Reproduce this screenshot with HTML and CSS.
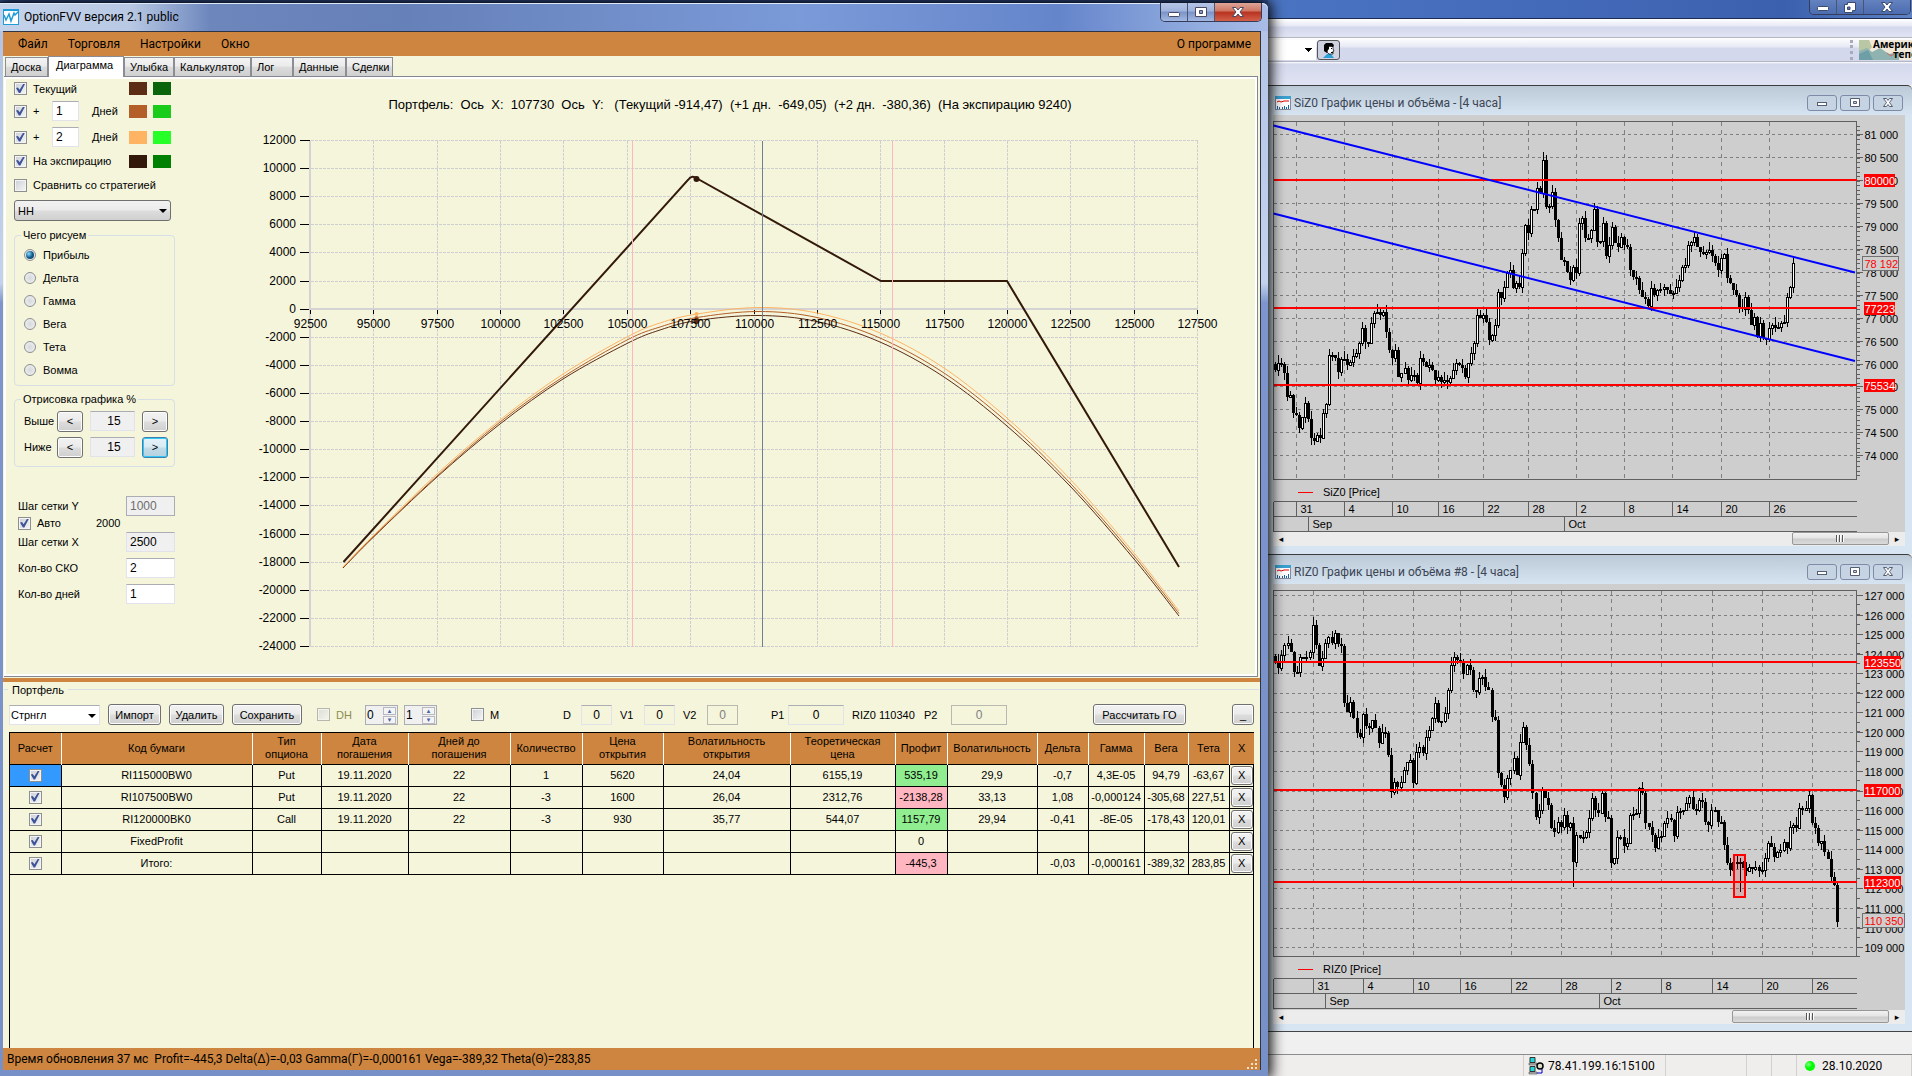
FILE: index.html
```html
<!DOCTYPE html>
<html lang="ru">
<head>
  <meta charset="UTF-8">
  <meta name="viewport" content="width=device-width, initial-scale=1.0">
  <title>OptionFVV версия 2.1 public</title>
  <link rel="stylesheet" href="styles.css">
</head>
<body>
  <div class="desktop">

    <section class="window">
      <header class="titlebar">
        <svg class="app-icon" width="16" height="16" viewBox="0 0 16 16">
          <rect x="0" y="0" width="16" height="16" fill="#1e9cd7"/>
          <rect x="1" y="2" width="14" height="13" fill="#fff"/>
          <path d="M1 6l2 5 3-6 2 7 3-8 1 2 4-4" fill="none" stroke="#1e9cd7" stroke-width="1.5"/>
        </svg>
        <h1>OptionFVV версия 2.1 public</h1>
        <div class="win-buttons">
          <button aria-label="Свернуть"><svg width="13" height="11"><rect x=".5" y="5.5" width="11" height="4" rx="1" fill="#fff" stroke="#4a4a60"/></svg></button>
          <button aria-label="Развернуть"><svg width="12" height="11"><path d="M.5.5h11v9H.5zM4.500 3.500v3h3v-3z" fill="#fff" fill-rule="evenodd" stroke="#4a4a60"/></svg></button>
          <button class="close" aria-label="Закрыть"><svg width="12" height="11"><path d="M.5.500h3.500l2 2.500 2-2.500h3.500l-3.500 4.500 3.500 4.500h-3.500l-2-2.500-2 2.500h-3.500l3.500-4.500z" fill="#fff" stroke="#4a4a60"/></svg></button>
        </div>
      </header>

      <div class="client">
        <nav class="menu">
          <a href="#">Файл</a>
          <a href="#">Торговля</a>
          <a href="#">Настройки</a>
          <a href="#">Окно</a>
          <a href="#" class="about">О программе</a>
        </nav>

        <div class="tabs">
          <button class="w43">Доска</button>
          <button class="w74 active">Диаграмма</button>
          <button class="w50">Улыбка</button>
          <button class="w76">Калькулятор</button>
          <button class="w41">Лог</button>
          <button class="w52">Данные</button>
          <button class="w46">Сделки</button>
        </div>

        <main class="page">
          <form class="sidebar">
            <div class="line first">
              <label><input type="checkbox" checked> Текущий</label>
              <i class="swatch c1"></i><i class="swatch c2"></i>
            </div>
            <div class="line days">
              <label class="plus"><input type="checkbox" checked> +</label>
              <input type="text" id="days1" value="1"><label class="unit" for="days1">Дней</label>
              <i class="swatch c3"></i><i class="swatch c4"></i>
            </div>
            <div class="line">
              <label class="plus"><input type="checkbox" checked> +</label>
              <input type="text" id="days2" value="2"><label class="unit" for="days2">Дней</label>
              <i class="swatch c5"></i><i class="swatch c6"></i>
            </div>
            <div class="line">
              <label><input type="checkbox" checked> На экспирацию</label>
              <i class="swatch c7"></i><i class="swatch c8"></i>
            </div>
            <div class="line">
              <label><input type="checkbox"> Сравнить со стратегией</label>
            </div>
            <div class="combo strategy">
              <select aria-label="Стратегия"><option>НН</option></select>
            </div>

            <fieldset class="draw">
              <legend>Чего рисуем</legend>
              <label><input type="radio" name="draw" checked> Прибыль</label>
              <label><input type="radio" name="draw"> Дельта</label>
              <label><input type="radio" name="draw"> Гамма</label>
              <label><input type="radio" name="draw"> Вега</label>
              <label><input type="radio" name="draw"> Тета</label>
              <label><input type="radio" name="draw"> Вомма</label>
            </fieldset>

            <fieldset class="range">
              <legend>Отрисовка графика %</legend>
              <div class="range-row">
                <label for="above">Выше</label>
                <button type="button">&lt;</button>
                <input type="text" id="above" value="15" readonly>
                <button type="button">&gt;</button>
              </div>
              <div class="range-row">
                <label for="below">Ниже</label>
                <button type="button">&lt;</button>
                <input type="text" id="below" value="15" readonly>
                <button type="button" class="hot">&gt;</button>
              </div>
            </fieldset>

            <div class="steps">
              <div class="step"><label for="stepY">Шаг сетки Y</label><input type="text" id="stepY" value="1000" disabled></div>
              <div class="auto"><label><input type="checkbox" checked> Авто</label><span>2000</span></div>
              <div class="step"><label for="stepX">Шаг сетки X</label><input type="text" id="stepX" value="2500" readonly></div>
              <div class="step gap"><label for="sko">Кол-во СКО</label><input type="text" id="sko" value="2"></div>
              <div class="step gap"><label for="dayCount">Кол-во дней</label><input type="text" id="dayCount" value="1"></div>
            </div>
          </form>
          <svg class="profit" id="profit" viewBox="175 80 1079 594"></svg>
        </main>

        <section class="portfolio">
          <h2>Портфель</h2>
          <div class="toolbar">
            <div class="combo portfolio-name">
              <select aria-label="Портфель"><option>Стрнгл</option></select>
            </div>
            <button class="btn b53">Импорт</button>
            <button class="btn b55">Удалить</button>
            <button class="btn b70">Сохранить</button>
            <label class="dh"><input type="checkbox" disabled> DH</label>
            <span class="spin"><input type="number" value="0" aria-label="DH от"><i></i></span>
            <span class="spin second"><input type="number" value="1" aria-label="DH до"><i></i></span>
            <label class="m"><input type="checkbox"> M</label>
            <label class="param d">D <input type="text" value="0"></label>
            <label class="param">V1 <input type="text" value="0"></label>
            <label class="param">V2 <input type="text" value="0" disabled></label>
            <label class="param p1">P1 <input type="text" value="0"></label>
            <span class="quote">RIZ0 110340</span>
            <label class="param p2">P2 <input type="text" value="0" disabled></label>
            <button class="btn b93 calc">Рассчитать ГО</button>
            <button class="btn b22">_</button>
          </div>

          <div class="grid">
            <table>
              <colgroup>
                <col class="k51"><col class="k191"><col class="k69"><col class="k87"><col class="k102"><col class="k72">
                <col class="k81"><col class="k127"><col class="k105"><col class="k52"><col class="k90"><col class="k51">
                <col class="k56"><col class="k44"><col class="k41"><col class="k25">
              </colgroup>
              <thead>
                <tr>
                  <th>Расчет</th><th>Код бумаги</th><th>Тип<br>опциона</th><th>Дата<br>погашения</th>
                  <th>Дней до<br>погашения</th><th>Количество</th><th>Цена<br>открытия</th><th>Волатильность<br>открытия</th>
                  <th>Теоретическая<br>цена</th><th>Профит</th><th>Волатильность</th><th>Дельта</th>
                  <th>Гамма</th><th>Вега</th><th>Тета</th><th>X</th>
                </tr>
              </thead>
              <tbody id="rows"></tbody>
            </table>
          </div>
        </section>

        <footer class="status">
          <span>Время обновления 37 мс&nbsp; Profit=-445,3 Delta(Δ)=-0,03 Gamma(Γ)=-0,000161 Vega=-389,32 Theta(Θ)=283,85</span>
          <svg width="12" height="12"><path d="M9 1h2v2h-2zM5 5h2v2h-2zM9 5h2v2h-2zM1 9h2v2h-2zM5 9h2v2h-2zM9 9h2v2h-2z" fill="#f3e3cf"/></svg>
        </footer>
      </div>
    </section>

    <section class="terminal">
      <div class="term-title">
        <div class="win-buttons dark">
          <button aria-label="Свернуть"><svg width="13" height="11"><rect x=".5" y="4.500" width="11" height="4" rx="1" fill="#fff" stroke="#3a4a70"/></svg></button>
          <button aria-label="Восстановить"><svg width="12" height="11"><path d="M3.500.500h8v8h-3v2h-8v-8h3zM3.500 5v2.500h2.500V5z" fill="#fff" fill-rule="evenodd" stroke="#3a4a70"/></svg></button>
          <button aria-label="Закрыть"><svg width="12" height="11"><path d="M.5.500h3.500l2 2.500 2-2.500h3.500l-3.500 4.500 3.500 4.500h-3.500l-2-2.500-2 2.500h-3.500l3.500-4.500z" fill="#fff" stroke="#3a4a70"/></svg></button>
        </div>
      </div>
      <div class="strip top"></div>
      <div class="strip tools">
        <select class="account" aria-label="Счет"><option></option></select>
        <button class="client-btn" aria-label="Клиент">
          <svg width="16" height="16" viewBox="0 0 16 16">
            <path d="M2 16l4-4h4l3 4z" fill="#2aa0d8"/>
            <path d="M6 4h6v3l1 2h-1v3H8l-2-2z" fill="#fff" stroke="#000" stroke-width=".7"/>
            <path d="M3 3l2-2h6l2 2-1 2-4-.5v3H7L6 11 3 9z"/>
            <path d="M10 6h1v1h-1zM10 10h2v1h-2z"/>
          </svg>
        </button>
        <a class="banner" href="#">
          <svg width="53" height="20" viewBox="0 0 53 20">
            <rect width="53" height="20" fill="#f1e9da"/>
            <path d="M0 0h10l3 7-4 5H0z" fill="#b9c7a4"/>
            <path d="M0 11l8-3 5 4 8-4 9 6 10-2v8H0z" fill="#8fb3b0"/>
            <path d="M0 14l9-4 5 10H0z" fill="#6f9fa6"/>
            <path d="M28 13l4 3 3-2" stroke="#c66" fill="none"/>
            <text x="14" y="8" class="banner-text">Америка</text>
            <text x="34" y="18" class="banner-text">теперь</text>
          </svg>
        </a>
      </div>
      <div class="strip low"></div>

      <article class="mdi si">
        <header>
          <svg width="16" height="14" viewBox="0 0 16 14"><rect x=".5" y=".5" width="15" height="13" fill="#fff" stroke="#889"/><rect width="16" height="3" fill="#3aa0d0"/><path d="M2 6l2-1 2 1 3-1h5" stroke="#d00" fill="none"/><path d="M2.500 13v-3M4.500 13V11M7.500 13v-2M9.500 13v-3M11.500 13v-2M13.500 13V9" stroke="#1565a8"/></svg>
          <h2>SiZ0 График цены и объёма - [4 часа]</h2>
          <button aria-label="Свернуть"><svg width="12" height="10"><rect x="1.500" y="4.500" width="9" height="3" fill="#fff" stroke="#555d70"/></svg></button>
          <button aria-label="Развернуть"><svg width="12" height="10"><path d="M1.500.500h9v8h-9zM4.500 3.500v2h3v-2z" fill="#fff" fill-rule="evenodd" stroke="#555d70"/></svg></button>
          <button aria-label="Закрыть"><svg width="12" height="10"><path d="M1.500.500h3l1.500 2 1.500-2h3l-3 4 3 4h-3l-1.500-2-1.500 2h-3l3-4z" fill="#fff" stroke="#555d70"/></svg></button>
        </header>
        <svg class="price" id="si" viewBox="5 0 632 417"></svg>
        <div class="scroll"><button aria-label="Влево">◂</button><i class="thumb short"></i><button aria-label="Вправо">▸</button></div>
      </article>

      <article class="mdi ri">
        <header>
          <svg width="16" height="14" viewBox="0 0 16 14"><rect x=".5" y=".5" width="15" height="13" fill="#fff" stroke="#889"/><rect width="16" height="3" fill="#3aa0d0"/><path d="M2 6l2-1 2 1 3-1h5" stroke="#d00" fill="none"/><path d="M2.500 13v-3M4.500 13V11M7.500 13v-2M9.500 13v-3M11.500 13v-2M13.500 13V9" stroke="#1565a8"/></svg>
          <h2>RIZ0 График цены и объёма #8 - [4 часа]</h2>
          <button aria-label="Свернуть"><svg width="12" height="10"><rect x="1.500" y="4.500" width="9" height="3" fill="#fff" stroke="#555d70"/></svg></button>
          <button aria-label="Развернуть"><svg width="12" height="10"><path d="M1.500.500h9v8h-9zM4.500 3.500v2h3v-2z" fill="#fff" fill-rule="evenodd" stroke="#555d70"/></svg></button>
          <button aria-label="Закрыть"><svg width="12" height="10"><path d="M1.500.500h3l1.500 2 1.500-2h3l-3 4 3 4h-3l-1.500-2-1.500 2h-3l3-4z" fill="#fff" stroke="#555d70"/></svg></button>
        </header>
        <svg class="price" id="ri" viewBox="5 0 632 426"></svg>
        <div class="scroll"><button aria-label="Влево">◂</button><i class="thumb"></i><button aria-label="Вправо">▸</button></div>
      </article>

      <div class="spacer"></div>
      <footer class="term-status">
        <span class="s1"></span>
        <span class="s2">
          <svg width="16" height="18" viewBox="0 0 16 18">
            <path d="M2 .5h5v5H2zM2 9.500h5v5H2z" fill="#20d8d8" stroke="#333"/>
            <path d="M1 6h8v2H1zM1 15h8v2H1z" fill="#bbb" stroke="#333" stroke-width=".5"/>
            <path d="M9 16h5v-4" stroke="#00c" fill="none"/>
            <circle cx="12" cy="9" r="3" fill="#ddc" stroke="#000" stroke-width="1.500"/>
          </svg>
          78.41.199.16:15100
        </span>
        <span class="s3"></span><span class="s4"></span><span class="s5"></span>
        <span class="s6"><i class="led"></i>28.10.2020</span>
      </footer>
    </section>
  </div>

  <script src="script.js"></script>
</body>
</html>
```
FILE: styles.css
```css
* {
  box-sizing: border-box;
}
body {
  margin: 0;
  font-family: "Liberation Sans", Arial, sans-serif;
  font-size: 11px;
  color: #000;
  background: #3c62b0;
  overflow: hidden;
}
button, input, select {
  font-family: inherit;
  font-size: inherit;
  color: inherit;
  margin: 0;
  padding: 0;
}
h1, h2 {
  margin: 0;
  font-weight: normal;
}
a {
  color: inherit;
  text-decoration: none;
}
svg {
  display: block;
}
.desktop {
  display: grid;
  grid-template-columns: 1268fr 644fr;
  height: 100vh;
}

/* main window */
.window {
  display: flex;
  flex-direction: column;
  min-width: 0;
  margin-top: 2px;
  padding: 0 7px 6px 3px;
  border-top: 1px solid #111a2c;
  border-radius: 0 6px 0 0;
  background: linear-gradient(#7f9cd6, #b4c4e6 29px, #c3d2ee 280px, #7d95cc 300px, #7890c8);
  box-shadow: 0 0 14px 3px #000;
  z-index: 1;
}
.titlebar {
  display: flex;
  align-items: flex-start;
  height: 28px;
  margin: 0 -7px 0 -3px;
  padding-left: 3px;
  background: linear-gradient(90deg, #c4d3ea 0, #b9c9e4 130px, #6d87bd 210px, #6680b8 400px, #7a9ad8 800px, #6585cb 1060px, #93ade0 1200px, #a8bce6);
  box-shadow: inset 0 1px #dfe8f8;
  border-radius: 0 6px 0 0;
}
.app-icon {
  margin-top: 6px;
}
.titlebar h1 {
  margin: 5px 0 0 5px;
  font: 12px/18px Roboto, "Open Sans", sans-serif;
}
.win-buttons {
  display: flex;
  height: 19px;
  margin: 0 6px 0 auto;
  border: 1px solid #333c58;
  border-top: 0;
  border-radius: 0 0 5px 5px;
  overflow: hidden;
}
.win-buttons button {
  display: flex;
  align-items: center;
  justify-content: center;
  width: 27px;
  border: 0;
  border-right: 1px solid #4a5572;
  background: linear-gradient(#b5c5e6, #9fb3dc 45%, #7a93c8 50%, #a3b8e2);
}
.win-buttons button:last-child {
  width: 46px;
  border-right: 0;
}
.win-buttons .close {
  background: linear-gradient(#dda596, #cf7563 45%, #b8321f 50%, #d3604a);
}
.win-buttons.dark {
  height: 15px;
  margin-right: 1px;
}
.win-buttons.dark button {
  background: linear-gradient(#6482bf, #4c6cb0);
}
.client {
  display: flex;
  flex-direction: column;
  flex: 1;
  min-height: 0;
  border-top: 1px solid #2c3446;
  border-right: 1px solid #2c3446;
  background: #f5f5dc;
}

.menu {
  display: flex;
  align-items: center;
  gap: 20px;
  height: 24px;
  flex: none;
  padding: 0 9px 0 15px;
  background: #cd853f;
  font: 12px/18px Roboto, "Open Sans", sans-serif;
}
.menu .about {
  margin-left: auto;
}

.tabs {
  display: flex;
  align-items: flex-end;
  height: 21px;
  flex: none;
  padding-left: 2px;
}
.tabs button {
  height: 19px;
  margin-bottom: 1px;
  padding-left: 5px;
  text-align: left;
  border: 1px solid #8c8c94;
  border-bottom: 0;
  background: linear-gradient(#f3f3f3, #ebebeb 45%, #dcdcdc 50%, #cfcfcf);
}
.tabs .active {
  height: 21px;
  margin-bottom: 0;
  padding-bottom: 4px;
  padding-left: 7px;
  background: #fff;
  position: relative;
}
.w43 { width: 43px; }
.w74 { width: 76px; }
.w50 { width: 50px; }
.w76 { width: 77px; }
.w41 { width: 42px; }
.w52 { width: 53px; }
.w46 { width: 47px; }

.page {
  display: flex;
  flex: none;
  margin: -1px 2px 0 1px;
  border: 1px solid #828790;
  border-width: 1px 1px 1px 0;
  box-shadow: inset 0 0 0 2px #fff;
  padding: 3px 3px 2px;
}
.sidebar {
  flex: 0 0 168px;
  padding-left: 7px;
}
.profit {
  flex: 1;
  min-width: 0;
}

.line {
  display: flex;
  align-items: center;
  width: 157px;
  height: 24px;
}
.line.first { height: 17px; }
.line.days { height: 28px; }
.line label {
  display: flex;
  align-items: center;
  gap: 6px;
  flex: 1;
  white-space: nowrap;
}
.line .plus { flex: 0 0 38px; }
.line .unit { padding-left: 13px; }
.line input[type=text] {
  width: 27px;
  height: 20px;
}
.swatch {
  width: 18px;
  height: 13px;
  margin-left: 6px;
}
.c1 { background: #5c2c14; }
.c2 { background: #0a640a; }
.c3 { background: #b45f28; }
.c4 { background: #19cc19; }
.c5 { background: #ffb464; }
.c6 { background: #28ff28; }
.c7 { background: #32190a; }
.c8 { background: #008000; }

input[type=text] {
  border: 1px solid #e2e3ea;
  border-top-color: #abadb3;
  padding-left: 3px;
  font-size: 12px;
  background: #fff;
}
input[type=checkbox] {
  appearance: none;
  display: grid;
  place-items: center;
  flex: none;
  width: 13px;
  height: 13px;
  border: 1px solid #8e8f8f;
  background: linear-gradient(135deg, #cbcfd5, #f6f6f6);
  box-shadow: inset 0 0 0 1px #f4f4f4;
}
input[type=checkbox]:checked::before {
  content: "";
  width: 9px;
  height: 9px;
  background: #3f5498;
  clip-path: polygon(0 45%, 22% 38%, 40% 65%, 80% 0, 100% 0, 48% 100%, 32% 100%);
}
input[type=radio] {
  appearance: none;
  display: grid;
  place-items: center;
  width: 12px;
  height: 12px;
  border: 1px solid #8e8f8f;
  border-radius: 50%;
  background: radial-gradient(#d5d8dc, #f4f4f4);
}
input[type=radio]:checked::before {
  content: "";
  width: 8px;
  height: 8px;
  border-radius: 50%;
  background: radial-gradient(circle at 35% 35%, #8fdcff, #12608f 50%, #0c2f4c);
}

.combo {
  position: relative;
}
.combo select {
  appearance: none;
  width: 100%;
  height: 100%;
  border: 1px solid #707070;
  border-radius: 3px;
  padding-left: 3px;
  background: linear-gradient(#f2f2f2, #ebebeb 48%, #dddddd 52%, #cfcfcf);
}
.combo::after {
  content: "";
  position: absolute;
  right: 4px;
  top: 9px;
  border: 4px solid transparent;
  border-top-color: #000;
  border-bottom: 0;
}
.strategy {
  width: 157px;
  height: 21px;
  margin-top: 3px;
}

fieldset {
  width: 161px;
  margin: 0;
  padding: 0 6px;
  border: 1px solid #d5dfe5;
  border-radius: 4px;
}
legend {
  height: 14px;
  margin-left: 0;
  padding: 0 2px;
  line-height: 14px;
}
.draw {
  height: 158px;
  margin-top: 7px;
  padding-top: 1px;
}
.draw label {
  display: flex;
  align-items: center;
  gap: 7px;
  height: 23px;
  padding-left: 3px;
}
.range {
  height: 75px;
  margin-top: 6px;
  padding-top: 2px;
}
.range-row {
  display: flex;
  align-items: center;
  height: 26px;
  padding-left: 3px;
}
.range-row label {
  width: 33px;
}
.range-row button {
  width: 26px;
  height: 21px;
}
.range-row input {
  width: 45px;
  height: 20px;
  margin: 0 7px;
  text-align: center;
}
.btn, .range-row button, td button {
  border: 1px solid #707070;
  border-radius: 3px;
  background: linear-gradient(#f2f2f2, #ebebeb 48%, #dddddd 52%, #cfcfcf);
  box-shadow: inset 0 0 0 1px #fcfcfc;
}
.range-row .hot {
  border-color: #3c7fb1;
  background: linear-gradient(#e5f2f9, #d9eaf3 48%, #c2dbe8 52%, #b5d0e0);
  box-shadow: inset 0 0 0 1px #30c8f2;
}
input[readonly] {
  background: #f0f0f0;
}
.steps {
  margin-top: 29px;
  padding-left: 4px;
  width: 161px;
}
.step {
  display: flex;
  align-items: center;
  justify-content: space-between;
  height: 20px;
}
.step.gap {
  margin-top: 6px;
}
.step input {
  width: 49px;
  height: 20px;
}
.step input:disabled {
  color: #6d6d6d;
  background: #f0f0f0;
  border-color: #abadb3;
}
.auto {
  display: flex;
  align-items: center;
  height: 16px;
  padding-bottom: 2px;
}
.auto label {
  display: flex;
  align-items: center;
  gap: 6px;
  width: 78px;
}

/* portfolio */
.portfolio {
  display: flex;
  flex-direction: column;
  flex: 1;
  min-height: 0;
  margin-top: 1px;
  padding: 0 6px;
  border-top: 4px solid #cd853f;
}
.portfolio h2 {
  display: flex;
  align-items: center;
  gap: 4px;
  height: 15px;
  margin: 0 -5px;
  font-size: 11px;
}
.portfolio h2::before, .portfolio h2::after {
  content: "";
  width: 4px;
  height: 1px;
  background: #d5dfe5;
}
.portfolio h2::after {
  flex: 1;
}
.toolbar {
  display: flex;
  align-items: center;
  height: 35px;
  gap: 8px;
  white-space: nowrap;
}
.portfolio-name {
  width: 91px;
  height: 20px;
}
.portfolio-name select {
  border: 1px solid #e2e3ea;
  border-top-color: #abadb3;
  border-radius: 0;
  padding-left: 1px;
  background: #fff;
}
.btn {
  height: 21px;
}
.b53 { width: 53px; }
.b55 { width: 55px; }
.b70 { width: 70px; }
.b93 { width: 93px; }
.b22 { width: 22px; margin-left: 38px; }
.calc { margin-left: auto; }
.dh, .m {
  display: flex;
  align-items: center;
  gap: 6px;
}
.dh {
  width: 35px;
  margin: 0 5px 0 7px;
  color: #8c8c50;
}
.dh input {
  opacity: .6;
}
.m {
  width: 84px;
  margin-left: 26px;
}
.spin {
  display: flex;
  width: 33px;
  height: 20px;
  padding: 1px;
  border: 1px solid #abadb3;
  background: #f0f0f0;
}
.spin.second { margin-left: -2px; }
.spin input {
  appearance: textfield;
  width: 16px;
  border: 0;
  background: none;
  font-size: 12px;
}
.spin input::-webkit-inner-spin-button {
  display: none;
}
.spin i {
  display: grid;
  flex: 1;
  gap: 1px;
}
.spin i::before, .spin i::after {
  content: "▴";
  border: 1px solid #b8b8c0;
  text-align: center;
  font: 7px/6px "DejaVu Sans", sans-serif;
  color: #4a63a8;
  background: #f4f4f4;
}
.spin i::after {
  content: "▾";
}
.param {
  display: flex;
  align-items: center;
  justify-content: space-between;
  width: 55px;
}
.param.d { width: 49px; }
.param.p1 { width: 73px; margin-left: 25px; }
.param.p2 { width: 83px; }
.quote { width: 64px; }
.param input {
  width: 31px;
  height: 20px;
  padding: 0;
  text-align: center;
  background: #f5f5dc;
}
.param input:disabled {
  border-color: #b8b9b0;
  color: #808080;
}
.param.p1 input, .param.p2 input { width: 56px; }

.grid {
  flex: 1;
  min-height: 0;
  border: 1px solid #000;
  border-bottom: 0;
}
table {
  width: 100%;
  table-layout: fixed;
  border-collapse: collapse;
}
.k51 { width: 51px; } .k191 { width: 191px; } .k69 { width: 69px; } .k87 { width: 87px; }
.k102 { width: 102px; } .k72 { width: 72px; } .k81 { width: 81px; } .k127 { width: 127px; }
.k105 { width: 105px; } .k52 { width: 52px; } .k90 { width: 90px; } .k56 { width: 56px; }
.k44 { width: 44px; } .k41 { width: 41px; } .k25 { width: 25px; }
th {
  height: 31px;
  padding: 0;
  border-right: 1px solid #fff;
  background: #cd853f;
  font-weight: normal;
  line-height: 13px;
}
th:last-child, td:last-child {
  border-right: 0;
}
td {
  height: 22px;
  padding: 0;
  border: 1px solid #000;
  border-left: 0;
  text-align: center;
  white-space: nowrap;
}
td input[type=checkbox] {
  margin: 0 auto;
}
td button {
  display: block;
  width: 22px;
  height: 19px;
  margin: 0 auto;
}
.selected { background: #3399ff; }
.up { background: #90ee90; }
.down { background: #ffb6c1; }

.status {
  display: flex;
  align-items: center;
  justify-content: space-between;
  flex: none;
  height: 22px;
  padding: 0 2px 0 4px;
  background: #cd853f;
  font: 12px/16px Roboto, "Open Sans", sans-serif;
}
.status svg {
  align-self: flex-end;
}

/* terminal behind */
.terminal {
  display: flex;
  flex-direction: column;
  min-width: 0;
  background: #f0f0f0;
}
.term-title {
  display: flex;
  height: 19px;
  flex: none;
  background: linear-gradient(90deg, #4a74c2, #4066b4 60%, #3a60ae 80%, #5f82c4);
  border-bottom: 1px solid #1d2c50;
}
.strip {
  flex: none;
  border-bottom: 1px solid #b4b6c2;
}
.top {
  height: 19px;
  background: linear-gradient(#fff, #e6e9f5 7px, #d4d8ec 8px, #e0e3f3);
}
.tools {
  display: flex;
  align-items: center;
  height: 24px;
  background: linear-gradient(#fff, #e6e9f5 9px, #d4d8ec 10px, #d4d8ec);
}
.low {
  height: 23px;
  border: 0;
  background: linear-gradient(#fff, #d4d8ec 2px, #e0e3f3);
}
.account {
  width: 48px;
  height: 20px;
  border: 0;
  appearance: none;
  background: linear-gradient(45deg, transparent 50%, #000 50%) 36px 8px / 4px 4px no-repeat, linear-gradient(-45deg, transparent 50%, #000 50%) 40px 8px / 4px 4px no-repeat, #fff;
}
.client-btn {
  width: 23px;
  height: 20px;
  margin-left: 1px;
  padding-left: 3px;
  border: 1px solid #555;
  border-radius: 3px;
  background: #cfd2e0;
}
.banner {
  margin-left: auto;
  border-left: 3px dotted #aab;
  padding-left: 6px;
}
.banner-text {
  font: bold 10px "Open Sans", sans-serif;
}

.mdi {
  display: flex;
  flex-direction: column;
  flex: none;
  padding: 0 7px 7px 5px;
  border-top: 1px solid #3c3c3c;
  border-radius: 0 5px 0 0;
  background: linear-gradient(#bccad8, #d7e4f2 30px);
}
.mdi.si {
  padding-bottom: 8px;
}
.mdi header {
  display: flex;
  align-items: center;
  gap: 3px;
  height: 29px;
  padding: 5px 2px 0;
  color: #3c4654;
}
.mdi h2 {
  flex: 1;
  font: 12px/18px Roboto, "Open Sans", sans-serif;
}
.mdi header button {
  display: grid;
  place-items: center;
  width: 30px;
  height: 16px;
  border: 1px solid #7e8ba8;
  border-radius: 3px;
  background: #c5d3e2;
}
.price {
  width: 100%;
}
.scroll {
  display: flex;
  height: 14px;
  background: #ececec;
}
.scroll button {
  width: 16px;
  border: 0;
  background: none;
  font: 9px/12px "DejaVu Sans", sans-serif;
}
.thumb {
  width: 157px;
  height: 13px;
  margin-left: auto;
  border: 1px solid #979797;
  border-radius: 2px;
  background: linear-gradient(#f2f2f2, #e4e4e4 48%, #cccccc 52%, #dadada);
}
.thumb.short {
  width: 97px;
}
.thumb::before {
  content: "";
  display: block;
  width: 9px;
  height: 7px;
  margin: 2px auto;
  background: repeating-linear-gradient(90deg, #555 0 1px, #fff 1px 2px, transparent 2px 3px);
}
.spacer {
  flex: 1;
  border-top: 1px solid #444;
  border-bottom: 1px solid #8c8c8c;
}
.term-status {
  display: grid;
  grid-template-columns: 256fr 142fr 81fr 25fr 25fr 115fr;
  height: 21px;
  font: 12px/16px Roboto, "Open Sans", sans-serif;
  background: #f0eeec;
}
.term-status span {
  display: flex;
  align-items: center;
  gap: 4px;
  padding-left: 4px;
  border-right: 1px solid #d4d0cc;
  white-space: nowrap;
}
.term-status .s6 {
  gap: 7px;
  padding-left: 8px;
}
.led {
  width: 10px;
  height: 10px;
  border-radius: 50%;
  background: radial-gradient(circle at 35% 35%, #8f8, #0f0 40%);
}

/* charts */
.axis {
  font: 12px "Liberation Sans", Arial, sans-serif;
}
.caption {
  font: 13px "Liberation Sans", Arial, sans-serif;
  white-space: pre;
}
.scale {
  font: 11px "Liberation Sans", Arial, sans-serif;
}
.crisp {
  shape-rendering: crispEdges;
}
```
FILE: script.js
```js
// portfolio table
const rows = [
  ["RI115000BW0", "Put", "19.11.2020", "22", "1", "5620", "24,04", "6155,19", "535,19", "29,9", "-0,7", "4,3E-05", "94,79", "-63,67"],
  ["RI107500BW0", "Put", "19.11.2020", "22", "-3", "1600", "26,04", "2312,76", "-2138,28", "33,13", "1,08", "-0,000124", "-305,68", "227,51"],
  ["RI120000BK0", "Call", "19.11.2020", "22", "-3", "930", "35,77", "544,07", "1157,79", "29,94", "-0,41", "-8E-05", "-178,43", "120,01"],
  ["FixedProfit", "", "", "", "", "", "", "", "0", "", "", "", "", ""],
  ["Итого:", "", "", "", "", "", "", "", "-445,3", "", "-0,03", "-0,000161", "-389,32", "283,85"]
];
document.getElementById("rows").innerHTML = rows.map((r, i) => {
  const cells = r.map((v, k) => {
    let cls = "";
    if (k === 8 && v !== "0") cls = v[0] === "-" ? ' class="down"' : ' class="up"';
    return `<td${cls}>${v}</td>`;
  }).join("");
  const first = `<td${i === 0 ? ' class="selected"' : ""}><input type="checkbox" checked aria-label="${r[0]}"></td>`;
  return `<tr>${first}${cells}<td><button>X</button></td></tr>`;
}).join("");

function line(x1, y1, x2, y2, stroke, extra = "") {
  return `<line x1="${x1}" y1="${y1}" x2="${x2}" y2="${y2}" stroke="${stroke}" ${extra}/>`;
}
function text(x, y, s, cls, extra = "") {
  return `<text x="${x}" y="${y}" class="${cls}" ${extra}>${s}</text>`;
}

// smooth curve through the points
function curve(pts) {
  let d = `M${pts[0]}`;
  for (let i = 0; i < pts.length - 1; i++) {
    const a = pts[i - 1] || pts[i], b = pts[i], c = pts[i + 1], e = pts[i + 2] || c;
    d += `C${b[0] + (c[0] - a[0]) / 6},${b[1] + (c[1] - a[1]) / 6} ${c[0] - (e[0] - b[0]) / 6},${c[1] - (e[1] - b[1]) / 6} ${c}`;
  }
  return d;
}

function drawProfit() {
  const left = 310.5, right = 1197.5, top = 140.5, bottom = 646.5, zero = 308.5;
  const px = i => Math.floor(left + i * (right - left) / 14) + .5;
  const py = i => Math.floor(top + i * (bottom - top) / 18) + .5;
  let s = '<g class="crisp">';
  for (let i = 0; i <= 18; i++) {
    s += line(left, py(i), right, py(i), "#cfcfcf", 'stroke-dasharray="3 1"');
    s += line(300, py(i), 310, py(i), "#000");
  }
  for (let i = 1; i <= 14; i++) s += line(px(i), top, px(i), bottom, "#cfcfcf", 'stroke-dasharray="3 1"');
  s += line(310, top, 310, bottom, "#d3d3d3", 'stroke-width="2"');
  s += line(left, 309, right, 309, "#d3d3d3", 'stroke-width="2"');
  for (let i = 0; i <= 14; i++) s += line(px(i), 310, px(i), 314, "#000");
  s += "</g>";

  const c = [
    [343, 568, 567.5, 567], [373, 537.5, 537, 536], [437, 477, 476, 474], [500, 424, 422, 420], [563, 379, 377, 374],
    [627, 343.5, 340, 337], [660, 330, 327, 323], [697, 320.500, 317.500, 314], [758, 315.500, 311.500, 307.500], [817, 321.500, 317.500, 313], [880, 342, 338, 333],
    [944, 377, 373, 368], [1007, 426, 422, 418], [1070, 486, 483, 479], [1134, 559, 556, 553], [1179, 616, 613.500, 611]
  ];
  ["#5c2c14", "#b45f28", "#ffb464"].forEach((color, k) => {
    s += `<path d="${curve(c.map(p => [p[0], p[k + 1]]))}" fill="none" stroke="${color}"/>`;
  });
  s += '<path d="M343.500 562L688 180Q692 174 698 179L881 281H1007L1179 567" fill="none" stroke="#32190a" stroke-width="2"/>';
  s += '<circle cx="696.500" cy="179" r="3" fill="#32190a"/><circle cx="696.500" cy="314" r="2" fill="#ffb464"/><circle cx="696.500" cy="318" r="2" fill="#b45f28"/><circle cx="696.500" cy="321" r="3" fill="#5c2c14"/>';
  s += '<g class="crisp">' + line(632.5, top, 632.5, bottom, "#ffb6c1") + line(892.5, top, 892.5, bottom, "#ffb6c1") + line(762.5, top, 762.5, bottom, "#708090") + "</g>";

  for (let i = 0; i <= 18; i++) s += text(296, py(i) + 3.5, 12000 - i * 2000, "axis", 'text-anchor="end"');
  for (let i = 0; i <= 14; i++) s += text(px(i), 328, 92500 + i * 2500, "axis", 'text-anchor="middle"');
  s += text(730, 109, "Портфель:  Ось  X:  107730  Ось  Y:   (Текущий -914,47)  (+1 дн.  -649,05)  (+2 дн.  -380,36)  (На экспирацию 9240)", "caption", 'text-anchor="middle"');
  document.getElementById("profit").innerHTML = s;
}

// closes are stored in thirds of a pixel, an array is [close, low]
const siData = [930, 910, 912, 938, 1012, 1005, 1060, 1065, 1103, 1070, 1030, 1078, 1133, 1143, 1125, 1135, 1060, 1032, 885, 885, 895, 935, 896, 896,
  915, 907, 888, 878, 850, 805, 845, 848, 790, 760, 755, 765, 755, 815, 870, 895, 870, 950, 940, 925, 960, 945, 945, 968, 895, 905, 920, 915, 930,
  960, 950, 965, 960, 965, 955, 930, 908, 915, 925, 950, 910, 880, 850, 765, 775, 765, 785, 840, 825, 795, 695, 715, 680, 640, 630, 685, 670, 680,
  580, 495, 520, 446, 448, 385, 398, 300, 440, 438, 395, 480, 535, 600, 603, 635, 660, 620, 640, 490, 475, 535, 533, 510, 448, 545, 544, 490, 588,
  555, 500, 548, 560, 530, 556, 560, 630, 650, 655, 690, 712, 718, 738, 685, 705, 690, 686, 682, 690, 703, 700, 682, 660, 620, 614, 555, 545, 530,
  560, 575, 582, 575, 570, 588, 610, 630, 595, 582, 655, 670, 690, 705, 740, 748, 710, 750, 795, 770, 830, 790, 835, 838, 805, 795, 803, 800,
  790, 785, 710, 680, 608];
const riData = [365, 385, 345, 315, 310, 335, 395, 396, 350, 352, 350, 335, 255, 316, 378, 355, 310, 290, 310, 280, 312, 318, 490, 515, 485, 535,
  578, 590, 522, 557, 565, 540, 565, 610, 575, 578, 645, 755, 725, 740, 725, 690, 665, 660, 730, 635, 620, 640, 590, 570, 535, 490, 545, 543, 520,
  450, 375, 350, 360, 370, 403, 375, 390, 450, 455, 415, 410, 440, 450, 530, 540, 700, 735, 770, 715, 690, 655, 705, 605, 560, 615, 672, 760,
  830, 810, 750, 775, 795, 865, 875, 845, 860, 825, 860, 850, [965, 1040], 885, 893, 892, 875, 835, 775, 810, 820, 760, 830, 835, 970, 955, 890, 892,
  917, 910, 825, 822, 820, 745, 760, 850, 860, 885, 925, 890, 888, 850, 835, 840, 888, 815, 813, 810, 790, 770, 808, 810, 780, 785, 845, 855, 810,
  810, 845, 846, 915, 968, 990, 965, 965, [965, 1055], 985, 993, 980, 987, 980, 994, 991, 955, 910, 922, 950, 935, 930, 905, 925, 860, 855, 865,
  805, 810, 805, 765, 850, 865, 910, 902, 935, 957, 1012, 1035, 1145];

function drawPrice(id, o) {
  const L = 5.5, R = 588.5;
  let s = `<rect x="5" y="0" width="632" height="${o.height}" fill="#cecece"/><g class="crisp">`;
  s += o.grid.map(x => line(x, o.top, x, o.bottom, "#7f7f7f", 'stroke-dasharray="4 4"')).join("");
  o.ticks.forEach(t => {
    s += line(L, t[1], R, t[1], "#7f7f7f", 'stroke-dasharray="3 3"') + line(R, t[1], R + 6, t[1], "#606060");
  });
  for (let y = o.top + 4; y < o.bottom; y += o.minor) s += line(R, Math.round(y) + .5, R + 3, Math.round(y) + .5, "#606060");
  s += `<path d="M${L} ${o.bottom}V${o.top}H${R}V${o.bottom}z" fill="none" stroke="#606060"/>`;

  // candles
  const step = (o.last - o.first) / (o.data.length - 1);
  let open = o.data[0] / 3 + o.shift - 6;
  let out = "";
  o.data.forEach((v, i) => {
    const close = (v[0] || v) / 3 + o.shift;
    const x = Math.round(o.first + i * step);
    const hi = Math.round(Math.min(open, close)), lo = Math.round(Math.max(open, close));
    const up = (i * 7 + 3) % 11 * .8, down = (i * 5 + 2) % 9 * .9;
    const low = v[1] ? v[1] / 3 + o.shift : lo + down;
    out += line(x + .5, hi - up, x + .5, low, "#000");
    if (close < open) out += `<rect x="${x - .5}" y="${hi + .5}" width="2" height="${Math.max(1, lo - hi)}" fill="#fff" stroke="#000"/>`;
    else out += `<rect x="${x - 1}" y="${hi}" width="3" height="${Math.max(2, lo - hi)}"/>`;
    open = close;
  });
  s += out;
  s += o.levels.map(l => line(L, l[1], R, l[1], "#f00", 'stroke-width="2"')).join("");
  s += "</g>" + (o.extra || "");

  o.ticks.forEach(t => { s += text(R + 8, t[1] + 4, t[0], "scale"); });
  s += o.levels.map(l => `<rect x="${R + 7.5}" y="${l[1] - 6}" width="${l[0].length * 6 + 1}" height="13" fill="#f00"/>` + text(R + 8, l[1] + 5, l[0], "scale", 'fill="#fff"')).join("");
  s += `<rect x="${R + 6}" y="${o.now[1] - 7}" width="${o.now[2]}" height="14" fill="#cecece" stroke="#707070"/>` + text(R + 8, o.now[1] + 4, o.now[0], "scale", 'fill="#f00"');

  // legend and dates
  const b = o.bottom + 22;
  s += '<g class="crisp">' + line(30, b - 9, 45, b - 9, "#f00") + "</g>" + text(55, b - 6, o.name, "scale");
  s += '<g class="crisp">' + line(L, b, R, b, "#606060") + line(L, b + 15, R, b + 15, "#606060") + line(L, b + 30, R, b + 30, "#606060") + line(L, b, L, b + 30, "#606060");
  s += o.grid.map(x => line(x, b, x, b + 15, "#606060")).join("") + o.months.map(m => line(m, b + 15, m, b + 30, "#606060")).join("") + "</g>";
  ["31", "4", "10", "16", "22", "28", "2", "8", "14", "20", "26"].forEach((d, i) => { s += text(o.grid[i] + 4, b + 11, d, "scale"); });
  s += text(o.months[0] + 4, b + 26, "Sep", "scale") + text(o.months[1] + 4, b + 26, "Oct", "scale");
  document.getElementById(id).innerHTML = s;
}

function ticks(from, count, by, y, pitch) {
  return Array.from({ length: count }, (_, i) => {
    const v = from - i * by;
    return [Math.floor(v / 1000) + " " + String(v % 1000).padStart(3, "0"), Math.round(y + i * pitch) + .5];
  });
}

drawProfit();
drawPrice("si", {
  name: "SiZ0 [Price]", height: 417, top: 6.5, bottom: 364.5, minor: 4.6,
  grid: [28.5, 76.5, 124.5, 170.5, 215.5, 260.5, 308.5, 356.5, 404.5, 453.5, 501.5],
  months: [40.5, 296.5],
  ticks: ticks(81000, 15, 500, 19, 22.95),
  levels: [["80000", 65], ["77223", 193], ["75534", 270]],
  now: ["78 192", 148.5, 36],
  data: siData, first: 7, last: 525, shift: -55,
  extra: '<path d="M5.500 10.500L587 157.500M5.500 98.500L587 246" stroke="#00f" stroke-width="2" fill="none"/>'
});
drawPrice("ri", {
  name: "RIZ0 [Price]", height: 426, top: 6.5, bottom: 372.5, minor: 9.78,
  grid: [45.5, 95.5, 145.5, 192.5, 243.5, 293.5, 343.5, 393.5, 444.5, 494.5, 544.5],
  months: [57.5, 331.5],
  ticks: ticks(127000, 19, 1000, 11, 19.56),
  levels: [["123550", 78], ["117000", 206], ["112300", 298]],
  now: ["110 350", 336.5, 42],
  data: riData, first: 7, last: 569, shift: -44,
  extra: '<rect x="466" y="271" width="11" height="42" fill="#f00" fill-opacity=".15" stroke="#f00" stroke-width="2"/>'
});
```
